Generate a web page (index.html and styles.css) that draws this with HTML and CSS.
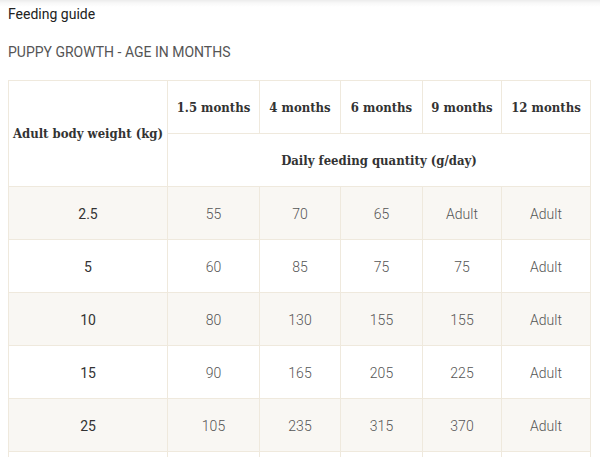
FILE: index.html
```html
<!DOCTYPE html>
<html>
<head>
<meta charset="utf-8">
<link rel="stylesheet" href="styles.css">
</head>
<body>
<div class="page">
  <h2 class="title">Feeding guide</h2>
  <p class="subtitle">PUPPY GROWTH - AGE IN MONTHS</p>
  <table class="guide">
    <colgroup>
      <col class="c0"><col class="c1"><col class="c2"><col class="c3"><col class="c4"><col class="c5">
    </colgroup>
    <thead>
      <tr>
        <th rowspan="2">Adult body weight (kg)</th>
        <th>1.5 months</th>
        <th>4 months</th>
        <th>6 months</th>
        <th>9 months</th>
        <th>12 months</th>
      </tr>
      <tr>
        <th colspan="5">Daily feeding quantity (g/day)</th>
      </tr>
    </thead>
    <tbody>
      <tr class="alt"><td class="w">2.5</td><td>55</td><td>70</td><td>65</td><td>Adult</td><td>Adult</td></tr>
      <tr><td class="w">5</td><td>60</td><td>85</td><td>75</td><td>75</td><td>Adult</td></tr>
      <tr class="alt"><td class="w">10</td><td>80</td><td>130</td><td>155</td><td>155</td><td>Adult</td></tr>
      <tr><td class="w">15</td><td>90</td><td>165</td><td>205</td><td>225</td><td>Adult</td></tr>
      <tr class="alt"><td class="w">25</td><td>105</td><td>235</td><td>315</td><td>370</td><td>Adult</td></tr>
      <tr><td></td><td></td><td></td><td></td><td></td><td></td></tr>
    </tbody>
  </table>
</div>
</body>
</html>
```

FILE: styles.css
```css
html, body {
  margin: 0;
  padding: 0;
  background: #ffffff;
}
body {
  font-family: Roboto, "Liberation Sans", sans-serif;
  overflow: hidden;
  height: 457px;
}
.page {
  padding: 4px 8px 0 8px;
  background: linear-gradient(to bottom, #ececec 0px, #f8f8f8 3px, #ffffff 7px);
}
.title {
  margin: 0;
  font-size: 14px;
  font-weight: 400;
  line-height: 20px;
  color: #222222;
}
.subtitle {
  margin: 18px 0 0 0;
  font-size: 14px;
  font-weight: 400;
  line-height: 20px;
  color: #555555;
}
.guide {
  margin-top: 18px;
  border-collapse: collapse;
  table-layout: fixed;
  width: 582px;
}
.c0 { width: 159px; }
.c1 { width: 92px; }
.c2 { width: 81px; }
.c3 { width: 82px; }
.c4 { width: 79px; }
.c5 { width: 89px; }
.guide th, .guide td {
  border: 1px solid #efe9dd;
  padding: 0;
  text-align: center;
  vertical-align: middle;
}
.guide th {
  height: 52px;
  font-family: "DejaVu Serif Condensed", "DejaVu Serif", serif;
  font-size: 13px;
  font-weight: 700;
  color: #333333;
  background: #ffffff;
}
.guide td {
  height: 50px;
  padding-top: 2px;
  font-size: 14px;
  font-weight: 300;
  color: #555555;
}
.guide td.w {
  font-weight: 400;
  color: #333333;
}
.guide tr.alt td {
  background: #f9f7f3;
}
```
